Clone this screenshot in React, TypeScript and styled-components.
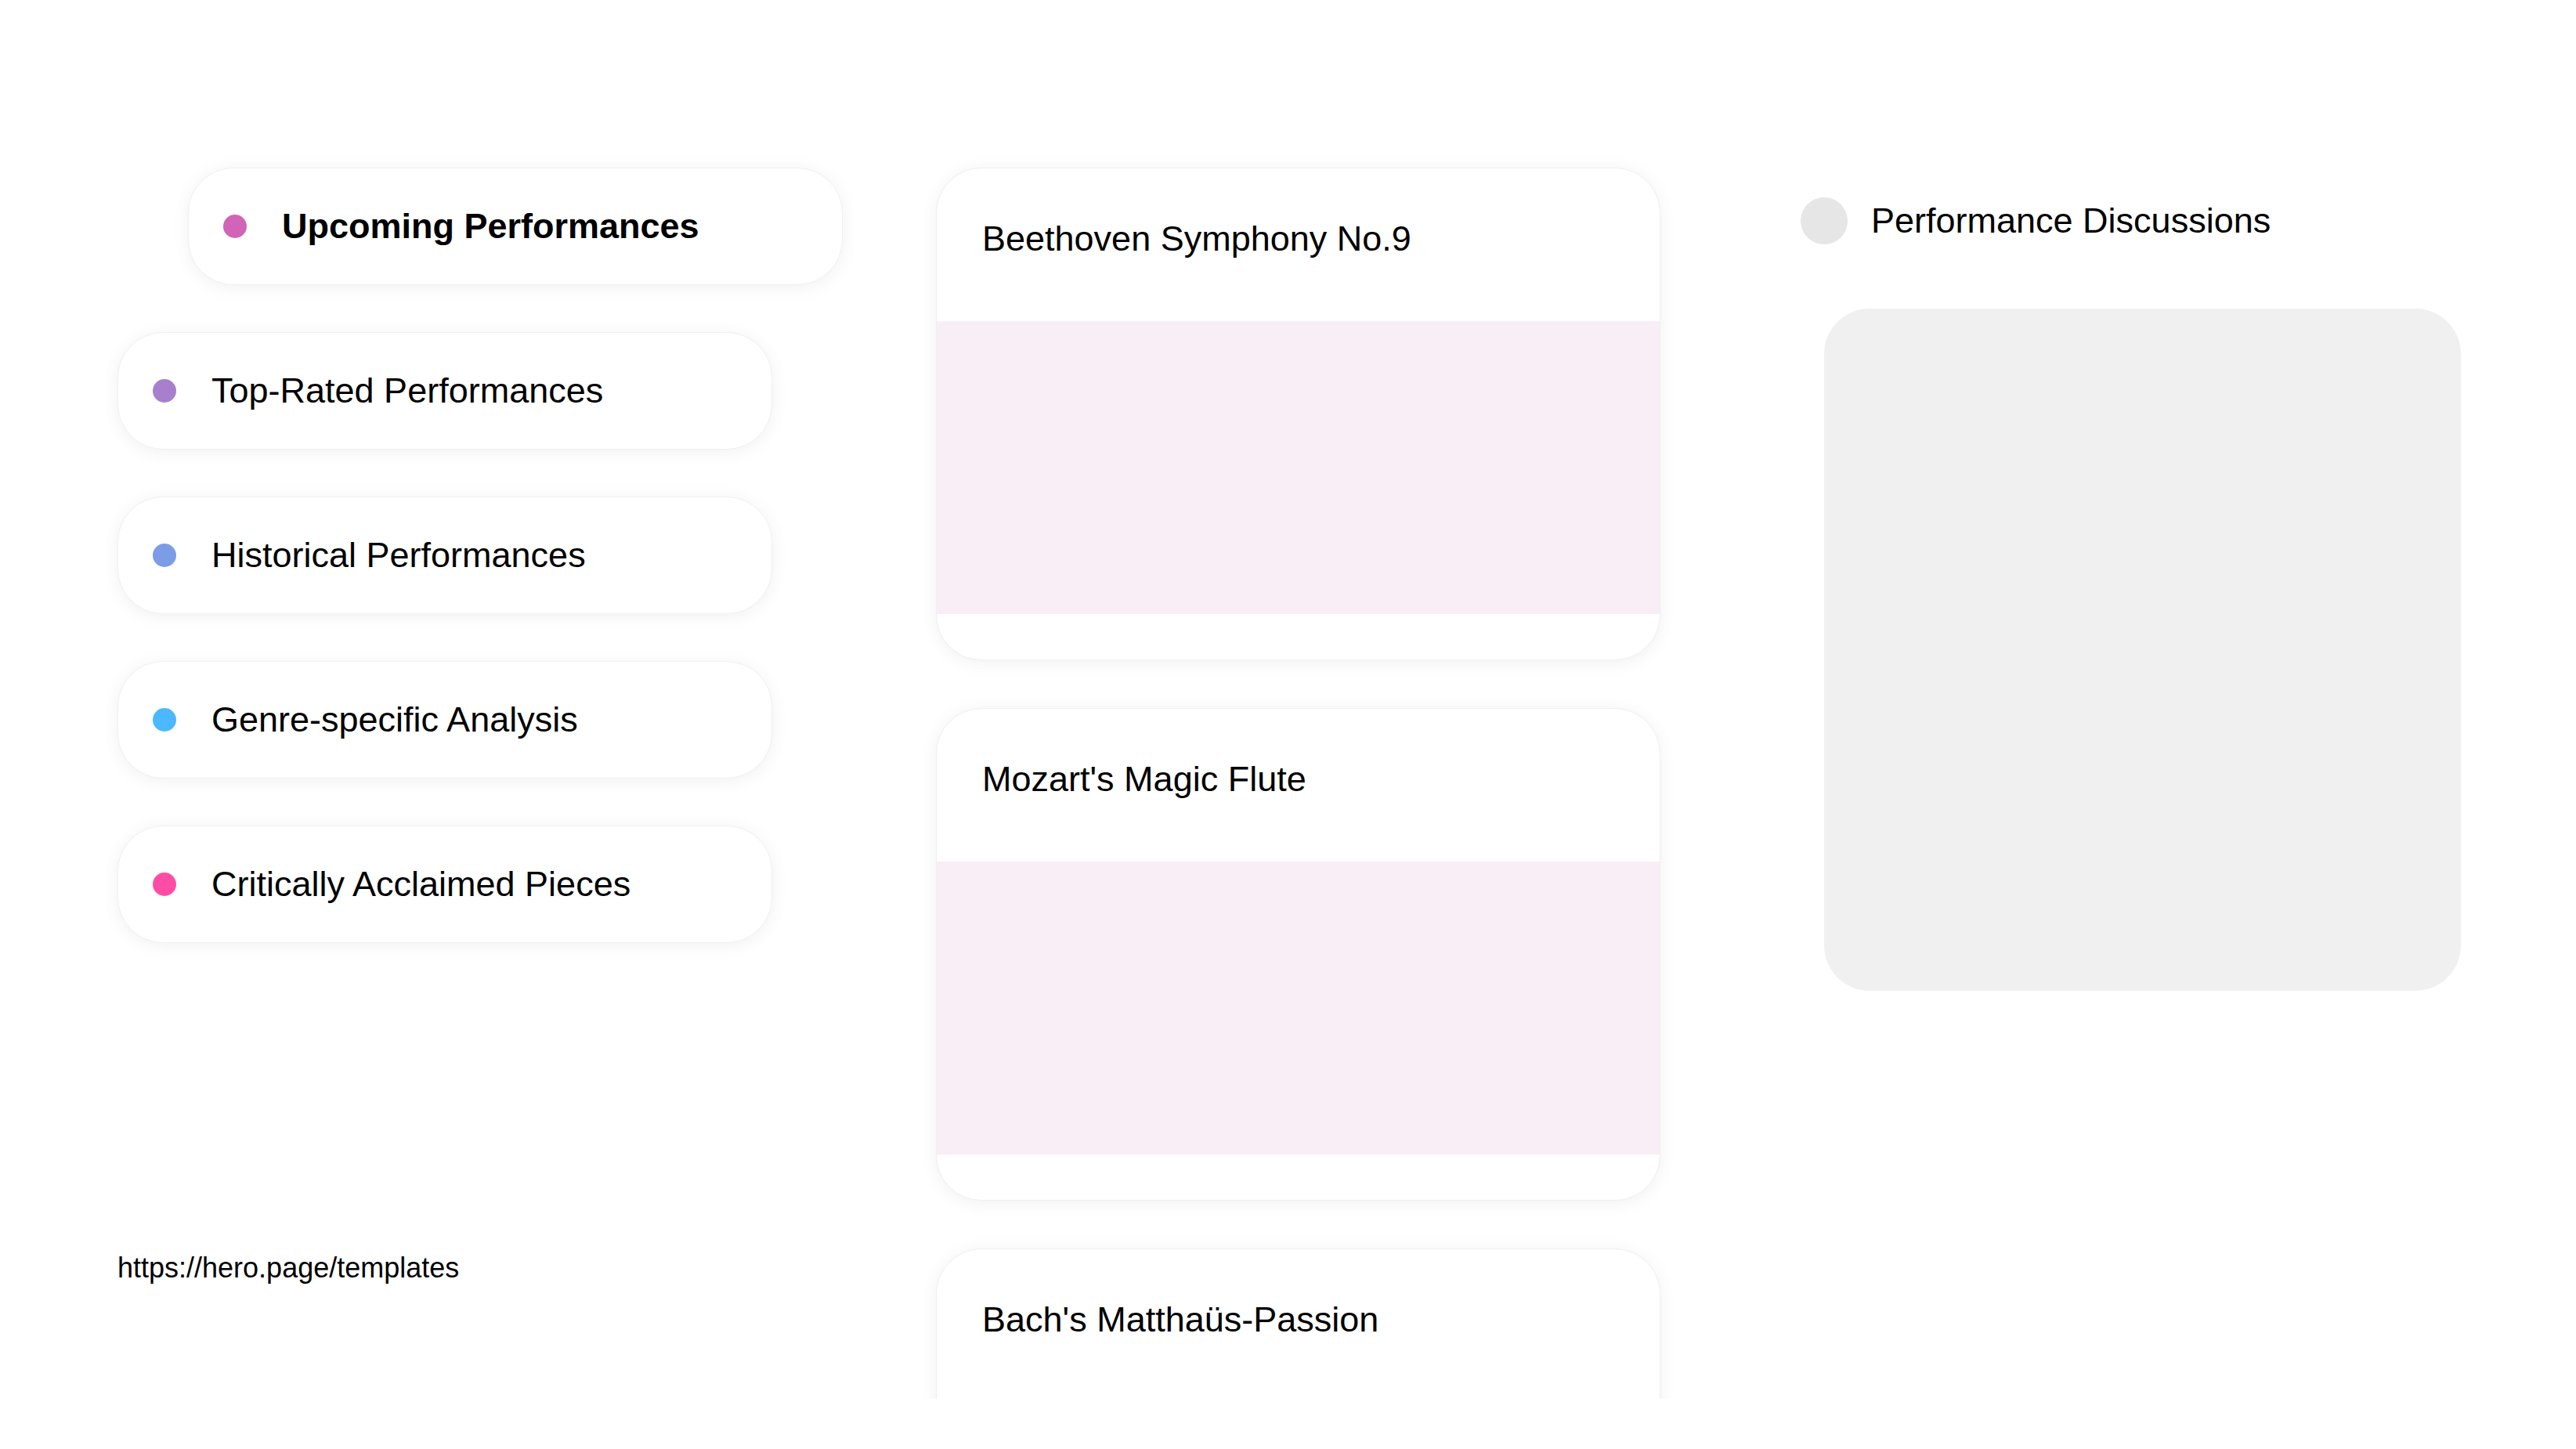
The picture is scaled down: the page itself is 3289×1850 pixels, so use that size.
import React from "react";
import styled, { createGlobalStyle } from "styled-components";

const GlobalStyle = createGlobalStyle`
  html, body {
    margin: 0;
    padding: 0;
    background: #ffffff;
    overflow: hidden;
  }
  body {
    font-family: "Liberation Sans", Arial, sans-serif;
    color: #000000;
  }
  * { box-sizing: border-box; }
`;

const Page = styled.div`
  display: flex;
  align-items: flex-start;
  width: 3289px;
  height: 1850px;
  padding: 214px 147px 0 150px;
`;

const LeftColumn = styled.nav`
  display: flex;
  flex-direction: column;
  width: 927px;
  margin-right: 118px;
  flex-shrink: 0;
`;

const PillList = styled.div`
  display: flex;
  flex-direction: column;
  gap: 60px;
`;

const Pill = styled.div<{ $active?: boolean }>`
  display: flex;
  align-items: center;
  gap: 45px;
  width: 836px;
  height: 150px;
  padding-left: 44px;
  margin-left: ${(p) => (p.$active ? "90px" : "0")};
  background: #ffffff;
  border: 1px solid #f0f0f0;
  border-radius: 58px;
  box-shadow: 0 3px 22px rgba(0, 0, 0, 0.06);
  font-size: 45px;
  font-weight: ${(p) => (p.$active ? 700 : 400)};
  color: #000;
`;

const Dot = styled.span<{ $color: string }>`
  width: 30px;
  height: 30px;
  border-radius: 50%;
  background: ${(p) => p.$color};
  flex-shrink: 0;
`;

const FooterLink = styled.div`
  margin-top: 394px;
  font-size: 36px;
  color: #000;
`;

const CenterColumn = styled.section`
  display: flex;
  flex-direction: column;
  gap: 61px;
  width: 985px;
  height: 1602px;
  margin: -30px 0 0 -30px;
  padding: 30px 30px 0 30px;
  overflow: hidden;
  flex-shrink: 0;
`;

const Card = styled.article`
  display: flex;
  flex-direction: column;
  width: 925px;
  height: 629px;
  flex-shrink: 0;
  background: #ffffff;
  border: 1px solid #efefef;
  border-radius: 58px;
  box-shadow: 0 3px 22px rgba(0, 0, 0, 0.06);
  overflow: hidden;
`;

const CardHeader = styled.div`
  height: 195px;
  padding: 64px 58px 0;
  flex-shrink: 0;
`;

const CardTitle = styled.h2`
  margin: 0;
  font-size: 45px;
  font-weight: 400;
  color: #000;
`;

const CardMedia = styled.div`
  height: 374px;
  background: #f9eef6;
  flex-shrink: 0;
`;

const RightColumn = styled.aside`
  display: flex;
  flex-direction: column;
  flex: 1;
  margin-left: 149px;
  padding-top: 38px;
`;

const DiscussionHeader = styled.div`
  display: flex;
  align-items: center;
  gap: 30px;
  height: 60px;
  font-size: 45px;
  color: #000;
`;

const Avatar = styled.span`
  width: 60px;
  height: 60px;
  border-radius: 50%;
  background: #e6e6e6;
  flex-shrink: 0;
`;

const DiscussionBox = styled.div`
  margin: 82px 0 0 30px;
  width: 813px;
  height: 871px;
  background: #f0f0f0;
  border-radius: 58px;
`;

const categories = [
  { label: "Upcoming Performances", color: "#d164b6", active: true },
  { label: "Top-Rated Performances", color: "#a77fcc" },
  { label: "Historical Performances", color: "#7c9ce6" },
  { label: "Genre-specific Analysis", color: "#4cb8ff" },
  { label: "Critically Acclaimed Pieces", color: "#ff4da6" },
];

const performances = [
  "Beethoven Symphony No.9",
  "Mozart's Magic Flute",
  "Bach's Matthaüs-Passion",
];

export default function App() {
  return (
    <>
      <GlobalStyle />
      <Page>
        <LeftColumn>
          <PillList>
            {categories.map((c) => (
              <Pill key={c.label} $active={c.active}>
                <Dot $color={c.color} />
                {c.label}
              </Pill>
            ))}
          </PillList>
          <FooterLink>https://hero.page/templates</FooterLink>
        </LeftColumn>
        <CenterColumn>
          {performances.map((t) => (
            <Card key={t}>
              <CardHeader>
                <CardTitle>{t}</CardTitle>
              </CardHeader>
              <CardMedia />
            </Card>
          ))}
        </CenterColumn>
        <RightColumn>
          <DiscussionHeader>
            <Avatar />
            Performance Discussions
          </DiscussionHeader>
          <DiscussionBox />
        </RightColumn>
      </Page>
    </>
  );
}
